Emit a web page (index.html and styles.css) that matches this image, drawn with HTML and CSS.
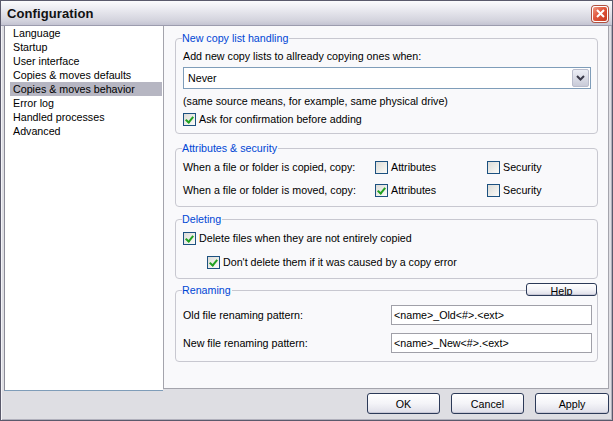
FILE: index.html
```html
<!DOCTYPE html>
<html>
<head>
<meta charset="utf-8">
<link rel="stylesheet" href="styles.css">
</head>
<body>
<div class="window">
  <div class="titlebar">
    <span class="title">Configuration</span>
    <span class="close"><svg width="9" height="9" viewBox="0 0 9 9"><path d="M1 1 L8 8 M8 1 L1 8" stroke="#fff" stroke-width="2" fill="none"/></svg></span>
  </div>
  <div class="main">
    <ul class="list">
      <li>Language</li>
      <li>Startup</li>
      <li>User interface</li>
      <li>Copies &amp; moves defaults</li>
      <li class="sel">Copies &amp; moves behavior</li>
      <li>Error log</li>
      <li>Handled processes</li>
      <li>Advanced</li>
    </ul>
    <div class="panel">
      <fieldset class="fs fs1">
        <legend>New copy list handling</legend>
        <div class="line">Add new copy lists to allready copying ones when:</div>
        <div class="combo"><span class="combo-text">Never</span><span class="combo-btn"><svg width="9" height="6" viewBox="0 0 9 6"><path d="M1 1 L4.5 4.5 L8 1" stroke="#3a3a4a" stroke-width="2" fill="none"/></svg></span></div>
        <div class="line note">(same source means, for example, same physical drive)</div>
        <label class="check row-ask"><span class="box on"></span>Ask for confirmation before adding</label>
      </fieldset>
      <fieldset class="fs fs2">
        <legend>Attributes &amp; security</legend>
        <div class="attr-grid">
          <span class="line">When a file or folder is copied, copy:</span>
          <label class="check"><span class="box"></span>Attributes</label>
          <label class="check"><span class="box"></span>Security</label>
          <span class="line">When a file or folder is moved, copy:</span>
          <label class="check"><span class="box on"></span>Attributes</label>
          <label class="check"><span class="box"></span>Security</label>
        </div>
      </fieldset>
      <fieldset class="fs fs3">
        <legend>Deleting</legend>
        <label class="check"><span class="box on"></span>Delete files when they are not entirely copied</label>
        <label class="check indent"><span class="box on"></span>Don't delete them if it was caused by a copy error</label>
      </fieldset>
      <div class="group4">
        <fieldset class="fs fs4">
          <legend>Renaming</legend>
          <div class="ren-row"><span class="line">Old file renaming pattern:</span><span class="input">&lt;name&gt;_Old&lt;#&gt;.&lt;ext&gt;</span></div>
          <div class="ren-row"><span class="line">New file renaming pattern:</span><span class="input">&lt;name&gt;_New&lt;#&gt;.&lt;ext&gt;</span></div>
        </fieldset>
        <button class="btn help">Help</button>
      </div>
    </div>
  </div>
  <div class="footer">
    <button class="btn">OK</button>
    <button class="btn">Cancel</button>
    <button class="btn apply">Apply</button>
  </div>
</div>
</body>
</html>
```
FILE: styles.css
```css
* { box-sizing: border-box; }
html, body { margin: 0; padding: 0; background: #fff; }
body {
  font-family: "Liberation Sans", Arial, sans-serif;
  font-size: 10.7px;
  color: #000;
}
.window {
  width: 613px;
  height: 421px;
  border: 1px solid #5a5a6c;
  background: #dedee3;
  box-shadow: inset 1px 0 0 #f4f4f8, inset -1px 0 0 #b0b0bc, inset 0 -1px 0 #b0b0bc;
  display: flex;
  flex-direction: column;
}
.titlebar {
  height: 25px;
  display: flex;
  align-items: center;
  justify-content: space-between;
  padding: 0 4px 0 6px;
  background: linear-gradient(#fbfbfd 0%, #eaeaf0 35%, #d4d4de 80%, #c4c4d2 100%);
  border-bottom: 1px solid #9c9cae;
}
.title {
  font-size: 13px;
  font-weight: bold;
  color: #111;
  letter-spacing: 0.1px;
}
.close {
  width: 16px;
  height: 16px;
  border-radius: 3px;
  border: 1px solid #fff;
  box-shadow: 0 0 0 1px #b05040;
  background: linear-gradient(135deg, #f09a84 0%, #e0563c 45%, #c7381e 100%);
  display: flex;
  align-items: center;
  justify-content: center;
  margin-top: 1px;
}
.main {
  display: flex;
  align-items: flex-start;
  padding: 0 3px;
}
.list {
  list-style: none;
  margin: 0;
  padding: 0 1px 0 5px;
  width: 159px;
  height: 365px;
  background: #fff;
  border-left: 1px solid #8c8c98;
  border-bottom: 1px solid #7f9db9;
}
.list li {
  height: 14px;
  line-height: 14px;
  padding-left: 3px;
  white-space: nowrap;
}
.list li.sel { background: #b6b6c2; }
.panel {
  width: 446px;
  height: 363px;
  background: #f9f9fb;
  border-left: 1px solid #a4a4ac;
  border-right: 1px solid #a4a4ac;
  border-bottom: 1px solid #a4a4ac;
  padding: 6px 10px 0 11px;
  display: flex;
  flex-direction: column;
}
.fs {
  margin: 0;
  border: 1px solid #c8c8d0;
  border-radius: 4px;
  min-width: 0;
}
.fs legend {
  padding: 0 1px 0 0;
  margin-left: -1px;
  height: 13px;
  line-height: 13px;
  color: #0046d5;
}
.line { height: 13px; line-height: 13px; white-space: nowrap; display: block; }
.fs1 { padding: 5px 6px 7px 7px; }
.combo {
  margin-top: 4px;
  height: 22px;
  border: 1px solid #7f9db9;
  background: #fff;
  display: flex;
  align-items: center;
  justify-content: space-between;
  padding: 0 1px 0 4px;
}
.combo-btn {
  width: 17px;
  height: 18px;
  border: 1px solid #b9bccc;
  border-radius: 2px;
  background: linear-gradient(#eceef6, #c9cbd8);
  display: flex;
  align-items: center;
  justify-content: center;
}
.note { margin-top: 6px; }
.row-ask { margin-top: 5px; }
.check {
  display: flex;
  align-items: center;
  height: 13px;
  line-height: 13px;
  white-space: nowrap;
}
.box {
  width: 13px;
  height: 13px;
  border: 1px solid #1c5180;
  background: linear-gradient(135deg, #dcdcd7, #fbfbf8);
  margin-right: 3px;
  flex: none;
  position: relative;
}
.box.on::after {
  content: "";
  position: absolute;
  left: 3px;
  top: 1px;
  width: 3px;
  height: 6px;
  border-right: 2px solid #21a121;
  border-bottom: 2px solid #21a121;
  transform: rotate(40deg);
}
.fs2 { margin-top: 8px; padding: 6px 7px 9px 7px; }
.attr-grid {
  display: grid;
  grid-template-columns: 192px 112px auto;
  grid-auto-rows: 13px;
  row-gap: 10px;
}
.fs3 { margin-top: 6px; padding: 6px 7px 9px 7px; display: flex; flex-direction: column; gap: 11px; }
.fs3 .indent { margin-left: 24px; }
.group4 { position: relative; margin-top: 5px; }
.fs4 { padding: 8px 5px 8px 7px; display: flex; flex-direction: column; gap: 8px; }
.ren-row {
  display: flex;
  align-items: center;
  justify-content: space-between;
  height: 20px;
}
.input {
  width: 201px;
  height: 20px;
  line-height: 18px;
  border: 1px solid #a0a0a8;
  background: #fff;
  padding-left: 2px;
  white-space: nowrap;
}
.btn {
  font-family: "Liberation Sans", Arial, sans-serif;
  font-size: 10.7px;
  color: #000;
  border: 1px solid #2c3a58;
  border-radius: 3px;
  background: linear-gradient(#ffffff 0%, #f4f4f8 50%, #dedee8 100%);
  box-shadow: inset 0 -1px 0 #c8c8d6;
  padding: 0;
  margin: 0;
}
.help {
  position: absolute;
  top: -1px;
  right: 1px;
  width: 71px;
  height: 13px;
  line-height: 15px;
  overflow: hidden;
  display: flex;
  justify-content: center;
  align-items: flex-start;
}
.footer {
  display: flex;
  justify-content: flex-end;
  gap: 11px;
  padding: 2px 3px 0 0;
}
.footer .btn { width: 73px; height: 21px; }
.footer .apply { width: 74px; }
```
